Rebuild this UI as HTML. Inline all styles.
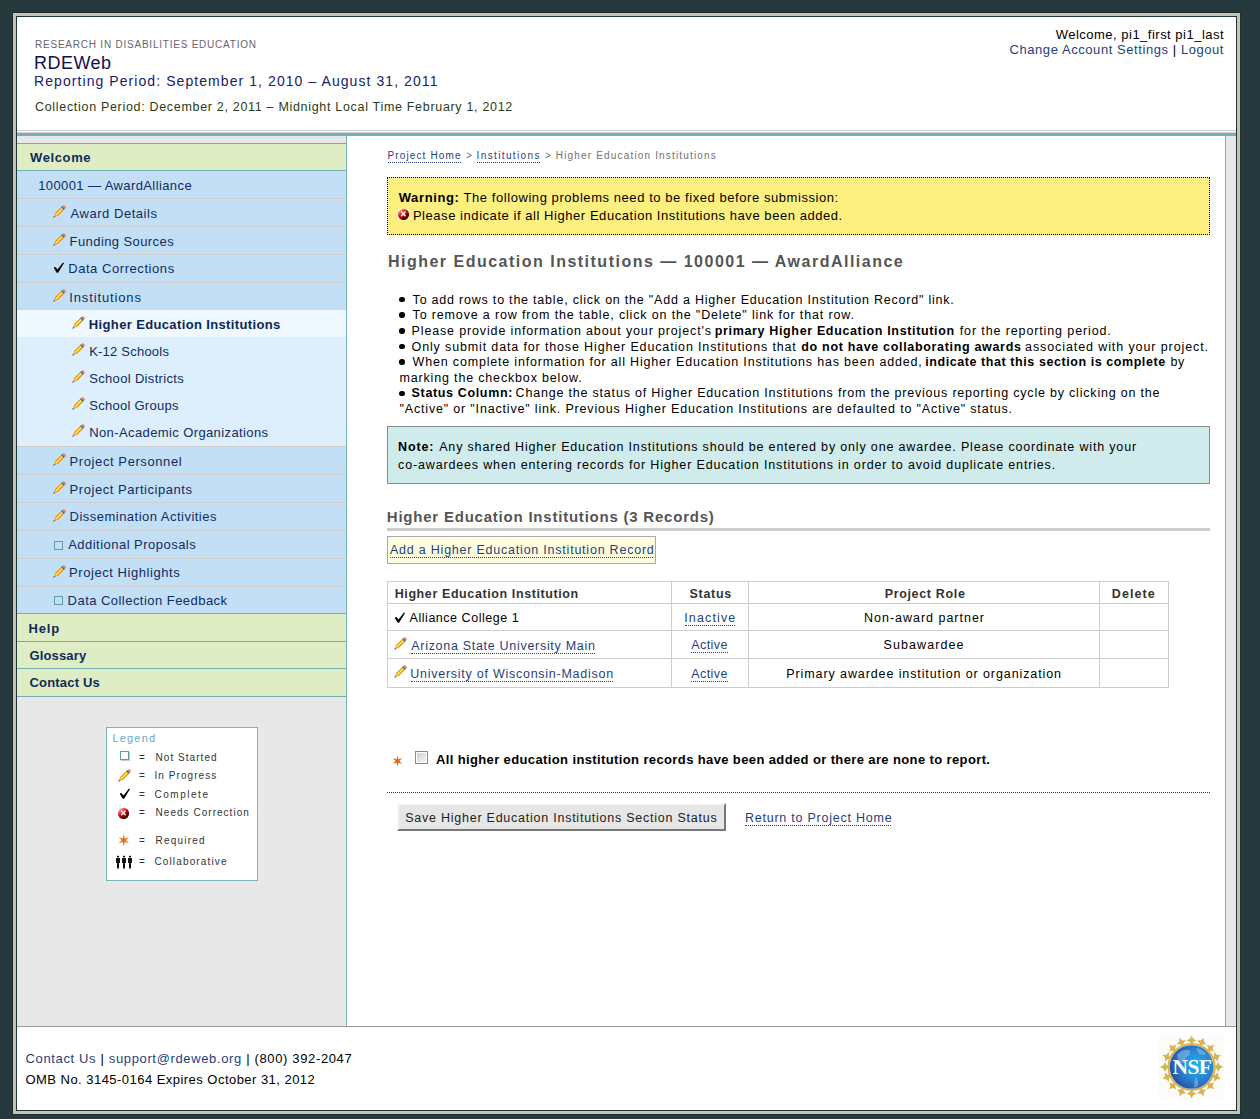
<!DOCTYPE html>
<html><head><meta charset="utf-8"><title>RDEWeb</title>
<style>
html,body{margin:0;padding:0;}
body{width:1260px;height:1119px;background:#263a3e;position:relative;overflow:hidden;font-family:"Liberation Sans", sans-serif;}
.r{position:absolute;box-sizing:content-box;}
.r svg{display:block;}
.t{position:absolute;white-space:nowrap;line-height:20px;font-family:"Liberation Sans", sans-serif;}
.du{text-decoration:underline dotted;text-decoration-thickness:1px;text-underline-offset:2px;}
</style></head><body>
<div class="r" style="left:12px;top:12px;width:1229px;height:1103px;background:#1d2f33;"></div>
<div class="r" style="left:13px;top:13px;width:1227px;height:1101px;background:#c6c4af;"></div>
<div class="r" style="left:16px;top:16px;width:1221px;height:1095px;background:#1f3236;"></div>
<div class="r" style="left:17px;top:17px;width:1219px;height:1093px;background:#ffffff;"></div>
<div class="r" style="left:17px;top:130px;width:1219px;height:1px;background:#c9c9c9;"></div>
<div class="r" style="left:17px;top:132px;width:1219px;height:1px;background:#d8d0d0;"></div>
<div class="r" style="left:17px;top:133px;width:1219px;height:3px;background:#72b0b2;"></div>
<div class="r" style="left:17px;top:136px;width:329px;height:890px;background:#e8e8e8;"></div>
<div class="r" style="left:346px;top:136px;width:1px;height:890px;background:#78b3b7;"></div>
<div class="r" style="left:1225px;top:136px;width:1px;height:890px;background:#76b2b6;"></div>
<div class="r" style="left:1226px;top:136px;width:10px;height:890px;background:#e8e8e8;"></div>
<div class="r" style="left:17px;top:1026px;width:1219px;height:1px;background:#9a9a9a;"></div>
<div class="r" style="left:17px;top:143px;width:329px;height:1px;background:#72aeb2;"></div>
<div class="r" style="left:17px;top:144px;width:329px;height:26px;background:#deedc3;"></div>
<div class="r" style="left:17px;top:170px;width:329px;height:1px;background:#72aeb2;"></div>
<div class="r" style="left:17px;top:171px;width:329px;height:27px;background:#c2dff6;"></div>
<div class="r" style="left:17px;top:198px;width:329px;height:1px;background:#cfcfcf;"></div>
<div class="r" style="left:17px;top:199px;width:329px;height:27px;background:#c2dff6;"></div>
<div class="r" style="left:17px;top:226px;width:329px;height:1px;background:#cfcfcf;"></div>
<div class="r" style="left:17px;top:227px;width:329px;height:27px;background:#c2dff6;"></div>
<div class="r" style="left:17px;top:254px;width:329px;height:1px;background:#cfcfcf;"></div>
<div class="r" style="left:17px;top:255px;width:329px;height:27px;background:#c2dff6;"></div>
<div class="r" style="left:17px;top:282px;width:329px;height:1px;background:#cfcfcf;"></div>
<div class="r" style="left:17px;top:283px;width:329px;height:27px;background:#c2dff6;"></div>
<div class="r" style="left:17px;top:310px;width:329px;height:27px;background:#eef8fe;"></div>
<div class="r" style="left:17px;top:337px;width:329px;height:109px;background:#ddeefc;"></div>
<div class="r" style="left:17px;top:446px;width:329px;height:1px;background:#cfcfcf;"></div>
<div class="r" style="left:17px;top:447px;width:329px;height:27px;background:#c2dff6;"></div>
<div class="r" style="left:17px;top:474px;width:329px;height:1px;background:#cfcfcf;"></div>
<div class="r" style="left:17px;top:475px;width:329px;height:27px;background:#c2dff6;"></div>
<div class="r" style="left:17px;top:502px;width:329px;height:1px;background:#cfcfcf;"></div>
<div class="r" style="left:17px;top:503px;width:329px;height:27px;background:#c2dff6;"></div>
<div class="r" style="left:17px;top:530px;width:329px;height:1px;background:#cfcfcf;"></div>
<div class="r" style="left:17px;top:531px;width:329px;height:27px;background:#c2dff6;"></div>
<div class="r" style="left:17px;top:558px;width:329px;height:1px;background:#cfcfcf;"></div>
<div class="r" style="left:17px;top:559px;width:329px;height:27px;background:#c2dff6;"></div>
<div class="r" style="left:17px;top:586px;width:329px;height:1px;background:#cfcfcf;"></div>
<div class="r" style="left:17px;top:587px;width:329px;height:26px;background:#c2dff6;"></div>
<div class="r" style="left:17px;top:613px;width:329px;height:1px;background:#72aeb2;"></div>
<div class="r" style="left:17px;top:614px;width:329px;height:27px;background:#deedc3;"></div>
<div class="r" style="left:17px;top:641px;width:329px;height:1px;background:#72aeb2;"></div>
<div class="r" style="left:17px;top:642px;width:329px;height:26px;background:#deedc3;"></div>
<div class="r" style="left:17px;top:668px;width:329px;height:1px;background:#72aeb2;"></div>
<div class="r" style="left:17px;top:669px;width:329px;height:27px;background:#deedc3;"></div>
<div class="r" style="left:17px;top:696px;width:329px;height:1px;background:#72aeb2;"></div>
<div class="r" style="left:53px;top:205px;width:13px;height:13px"><svg width="13" height="13" viewBox="0 0 13 13" style="overflow:visible"><g transform="translate(0.3,12.7) rotate(-45)">
<polygon points="0,0 4.4,-1.95 4.4,1.95" fill="#dcae94"/><polygon points="0,0 2.0,-0.9 2.0,0.9" fill="#6a625e"/>
<rect x="4.3" y="-1.95" width="8.6" height="3.9" fill="#e0800f"/><rect x="4.3" y="-1.1" width="8.6" height="2.2" fill="#ffcc10"/><rect x="4.3" y="-0.7" width="8.6" height="0.9" fill="#fff060"/>
<rect x="12.9" y="-1.95" width="1.6" height="3.9" fill="#2d6a86"/><rect x="12.9" y="-0.5" width="1.6" height="0.9" fill="#6aa8c8"/>
<path d="M14.5,-1.95 H15.1 A1.6,1.95 0 0 1 15.1,1.95 H14.5 Z" fill="#ee7d50"/></g></svg></div>
<div class="r" style="left:53px;top:233px;width:13px;height:13px"><svg width="13" height="13" viewBox="0 0 13 13" style="overflow:visible"><g transform="translate(0.3,12.7) rotate(-45)">
<polygon points="0,0 4.4,-1.95 4.4,1.95" fill="#dcae94"/><polygon points="0,0 2.0,-0.9 2.0,0.9" fill="#6a625e"/>
<rect x="4.3" y="-1.95" width="8.6" height="3.9" fill="#e0800f"/><rect x="4.3" y="-1.1" width="8.6" height="2.2" fill="#ffcc10"/><rect x="4.3" y="-0.7" width="8.6" height="0.9" fill="#fff060"/>
<rect x="12.9" y="-1.95" width="1.6" height="3.9" fill="#2d6a86"/><rect x="12.9" y="-0.5" width="1.6" height="0.9" fill="#6aa8c8"/>
<path d="M14.5,-1.95 H15.1 A1.6,1.95 0 0 1 15.1,1.95 H14.5 Z" fill="#ee7d50"/></g></svg></div>
<div class="r" style="left:53px;top:289px;width:13px;height:13px"><svg width="13" height="13" viewBox="0 0 13 13" style="overflow:visible"><g transform="translate(0.3,12.7) rotate(-45)">
<polygon points="0,0 4.4,-1.95 4.4,1.95" fill="#dcae94"/><polygon points="0,0 2.0,-0.9 2.0,0.9" fill="#6a625e"/>
<rect x="4.3" y="-1.95" width="8.6" height="3.9" fill="#e0800f"/><rect x="4.3" y="-1.1" width="8.6" height="2.2" fill="#ffcc10"/><rect x="4.3" y="-0.7" width="8.6" height="0.9" fill="#fff060"/>
<rect x="12.9" y="-1.95" width="1.6" height="3.9" fill="#2d6a86"/><rect x="12.9" y="-0.5" width="1.6" height="0.9" fill="#6aa8c8"/>
<path d="M14.5,-1.95 H15.1 A1.6,1.95 0 0 1 15.1,1.95 H14.5 Z" fill="#ee7d50"/></g></svg></div>
<div class="r" style="left:72px;top:316px;width:13px;height:13px"><svg width="13" height="13" viewBox="0 0 13 13" style="overflow:visible"><g transform="translate(0.3,12.7) rotate(-45)">
<polygon points="0,0 4.4,-1.95 4.4,1.95" fill="#dcae94"/><polygon points="0,0 2.0,-0.9 2.0,0.9" fill="#6a625e"/>
<rect x="4.3" y="-1.95" width="8.6" height="3.9" fill="#e0800f"/><rect x="4.3" y="-1.1" width="8.6" height="2.2" fill="#ffcc10"/><rect x="4.3" y="-0.7" width="8.6" height="0.9" fill="#fff060"/>
<rect x="12.9" y="-1.95" width="1.6" height="3.9" fill="#2d6a86"/><rect x="12.9" y="-0.5" width="1.6" height="0.9" fill="#6aa8c8"/>
<path d="M14.5,-1.95 H15.1 A1.6,1.95 0 0 1 15.1,1.95 H14.5 Z" fill="#ee7d50"/></g></svg></div>
<div class="r" style="left:72px;top:343px;width:13px;height:13px"><svg width="13" height="13" viewBox="0 0 13 13" style="overflow:visible"><g transform="translate(0.3,12.7) rotate(-45)">
<polygon points="0,0 4.4,-1.95 4.4,1.95" fill="#dcae94"/><polygon points="0,0 2.0,-0.9 2.0,0.9" fill="#6a625e"/>
<rect x="4.3" y="-1.95" width="8.6" height="3.9" fill="#e0800f"/><rect x="4.3" y="-1.1" width="8.6" height="2.2" fill="#ffcc10"/><rect x="4.3" y="-0.7" width="8.6" height="0.9" fill="#fff060"/>
<rect x="12.9" y="-1.95" width="1.6" height="3.9" fill="#2d6a86"/><rect x="12.9" y="-0.5" width="1.6" height="0.9" fill="#6aa8c8"/>
<path d="M14.5,-1.95 H15.1 A1.6,1.95 0 0 1 15.1,1.95 H14.5 Z" fill="#ee7d50"/></g></svg></div>
<div class="r" style="left:72px;top:370px;width:13px;height:13px"><svg width="13" height="13" viewBox="0 0 13 13" style="overflow:visible"><g transform="translate(0.3,12.7) rotate(-45)">
<polygon points="0,0 4.4,-1.95 4.4,1.95" fill="#dcae94"/><polygon points="0,0 2.0,-0.9 2.0,0.9" fill="#6a625e"/>
<rect x="4.3" y="-1.95" width="8.6" height="3.9" fill="#e0800f"/><rect x="4.3" y="-1.1" width="8.6" height="2.2" fill="#ffcc10"/><rect x="4.3" y="-0.7" width="8.6" height="0.9" fill="#fff060"/>
<rect x="12.9" y="-1.95" width="1.6" height="3.9" fill="#2d6a86"/><rect x="12.9" y="-0.5" width="1.6" height="0.9" fill="#6aa8c8"/>
<path d="M14.5,-1.95 H15.1 A1.6,1.95 0 0 1 15.1,1.95 H14.5 Z" fill="#ee7d50"/></g></svg></div>
<div class="r" style="left:72px;top:397px;width:13px;height:13px"><svg width="13" height="13" viewBox="0 0 13 13" style="overflow:visible"><g transform="translate(0.3,12.7) rotate(-45)">
<polygon points="0,0 4.4,-1.95 4.4,1.95" fill="#dcae94"/><polygon points="0,0 2.0,-0.9 2.0,0.9" fill="#6a625e"/>
<rect x="4.3" y="-1.95" width="8.6" height="3.9" fill="#e0800f"/><rect x="4.3" y="-1.1" width="8.6" height="2.2" fill="#ffcc10"/><rect x="4.3" y="-0.7" width="8.6" height="0.9" fill="#fff060"/>
<rect x="12.9" y="-1.95" width="1.6" height="3.9" fill="#2d6a86"/><rect x="12.9" y="-0.5" width="1.6" height="0.9" fill="#6aa8c8"/>
<path d="M14.5,-1.95 H15.1 A1.6,1.95 0 0 1 15.1,1.95 H14.5 Z" fill="#ee7d50"/></g></svg></div>
<div class="r" style="left:72px;top:424px;width:13px;height:13px"><svg width="13" height="13" viewBox="0 0 13 13" style="overflow:visible"><g transform="translate(0.3,12.7) rotate(-45)">
<polygon points="0,0 4.4,-1.95 4.4,1.95" fill="#dcae94"/><polygon points="0,0 2.0,-0.9 2.0,0.9" fill="#6a625e"/>
<rect x="4.3" y="-1.95" width="8.6" height="3.9" fill="#e0800f"/><rect x="4.3" y="-1.1" width="8.6" height="2.2" fill="#ffcc10"/><rect x="4.3" y="-0.7" width="8.6" height="0.9" fill="#fff060"/>
<rect x="12.9" y="-1.95" width="1.6" height="3.9" fill="#2d6a86"/><rect x="12.9" y="-0.5" width="1.6" height="0.9" fill="#6aa8c8"/>
<path d="M14.5,-1.95 H15.1 A1.6,1.95 0 0 1 15.1,1.95 H14.5 Z" fill="#ee7d50"/></g></svg></div>
<div class="r" style="left:53px;top:453px;width:13px;height:13px"><svg width="13" height="13" viewBox="0 0 13 13" style="overflow:visible"><g transform="translate(0.3,12.7) rotate(-45)">
<polygon points="0,0 4.4,-1.95 4.4,1.95" fill="#dcae94"/><polygon points="0,0 2.0,-0.9 2.0,0.9" fill="#6a625e"/>
<rect x="4.3" y="-1.95" width="8.6" height="3.9" fill="#e0800f"/><rect x="4.3" y="-1.1" width="8.6" height="2.2" fill="#ffcc10"/><rect x="4.3" y="-0.7" width="8.6" height="0.9" fill="#fff060"/>
<rect x="12.9" y="-1.95" width="1.6" height="3.9" fill="#2d6a86"/><rect x="12.9" y="-0.5" width="1.6" height="0.9" fill="#6aa8c8"/>
<path d="M14.5,-1.95 H15.1 A1.6,1.95 0 0 1 15.1,1.95 H14.5 Z" fill="#ee7d50"/></g></svg></div>
<div class="r" style="left:53px;top:481px;width:13px;height:13px"><svg width="13" height="13" viewBox="0 0 13 13" style="overflow:visible"><g transform="translate(0.3,12.7) rotate(-45)">
<polygon points="0,0 4.4,-1.95 4.4,1.95" fill="#dcae94"/><polygon points="0,0 2.0,-0.9 2.0,0.9" fill="#6a625e"/>
<rect x="4.3" y="-1.95" width="8.6" height="3.9" fill="#e0800f"/><rect x="4.3" y="-1.1" width="8.6" height="2.2" fill="#ffcc10"/><rect x="4.3" y="-0.7" width="8.6" height="0.9" fill="#fff060"/>
<rect x="12.9" y="-1.95" width="1.6" height="3.9" fill="#2d6a86"/><rect x="12.9" y="-0.5" width="1.6" height="0.9" fill="#6aa8c8"/>
<path d="M14.5,-1.95 H15.1 A1.6,1.95 0 0 1 15.1,1.95 H14.5 Z" fill="#ee7d50"/></g></svg></div>
<div class="r" style="left:53px;top:509px;width:13px;height:13px"><svg width="13" height="13" viewBox="0 0 13 13" style="overflow:visible"><g transform="translate(0.3,12.7) rotate(-45)">
<polygon points="0,0 4.4,-1.95 4.4,1.95" fill="#dcae94"/><polygon points="0,0 2.0,-0.9 2.0,0.9" fill="#6a625e"/>
<rect x="4.3" y="-1.95" width="8.6" height="3.9" fill="#e0800f"/><rect x="4.3" y="-1.1" width="8.6" height="2.2" fill="#ffcc10"/><rect x="4.3" y="-0.7" width="8.6" height="0.9" fill="#fff060"/>
<rect x="12.9" y="-1.95" width="1.6" height="3.9" fill="#2d6a86"/><rect x="12.9" y="-0.5" width="1.6" height="0.9" fill="#6aa8c8"/>
<path d="M14.5,-1.95 H15.1 A1.6,1.95 0 0 1 15.1,1.95 H14.5 Z" fill="#ee7d50"/></g></svg></div>
<div class="r" style="left:53px;top:565px;width:13px;height:13px"><svg width="13" height="13" viewBox="0 0 13 13" style="overflow:visible"><g transform="translate(0.3,12.7) rotate(-45)">
<polygon points="0,0 4.4,-1.95 4.4,1.95" fill="#dcae94"/><polygon points="0,0 2.0,-0.9 2.0,0.9" fill="#6a625e"/>
<rect x="4.3" y="-1.95" width="8.6" height="3.9" fill="#e0800f"/><rect x="4.3" y="-1.1" width="8.6" height="2.2" fill="#ffcc10"/><rect x="4.3" y="-0.7" width="8.6" height="0.9" fill="#fff060"/>
<rect x="12.9" y="-1.95" width="1.6" height="3.9" fill="#2d6a86"/><rect x="12.9" y="-0.5" width="1.6" height="0.9" fill="#6aa8c8"/>
<path d="M14.5,-1.95 H15.1 A1.6,1.95 0 0 1 15.1,1.95 H14.5 Z" fill="#ee7d50"/></g></svg></div>
<div class="r" style="left:53px;top:262px;width:11px;height:11px"><svg width="11" height="11" viewBox="0 0 11 11" style="overflow:visible"><path d="M1.0,6.3 C0.9,5.2 2.1,4.6 2.9,5.4 L4.5,7.5 L9.6,1.1 C10.2,0.6 11.0,0.9 11.2,1.3 L10.4,1.9 L5.1,10.8 L3.7,10.8 Z" fill="#000"/></svg></div>
<div class="r" style="left:54px;top:541px;width:9px;height:9px"><div style="position:absolute;width:7px;height:7px;border:1px solid #5b9fa5;"></div></div>
<div class="r" style="left:54px;top:596px;width:9px;height:9px"><div style="position:absolute;width:7px;height:7px;border:1px solid #5b9fa5;"></div></div>
<div class="r" style="left:106px;top:727px;width:150px;height:152px;background:#fff;border:1px solid #7ab6ba"></div>
<div class="r" style="left:120px;top:751px;width:9px;height:9px"><div style="position:absolute;left:1px;top:1px;width:9px;height:9px;background:#c8c8c8"></div><div style="position:absolute;width:7px;height:7px;border:1px solid #5b9fa5;background:#fff"></div></div>
<div class="r" style="left:118px;top:769px;width:13px;height:13px"><svg width="13" height="13" viewBox="0 0 13 13" style="overflow:visible"><g transform="translate(0.3,12.7) rotate(-45)">
<polygon points="0,0 4.4,-1.95 4.4,1.95" fill="#dcae94"/><polygon points="0,0 2.0,-0.9 2.0,0.9" fill="#6a625e"/>
<rect x="4.3" y="-1.95" width="8.6" height="3.9" fill="#e0800f"/><rect x="4.3" y="-1.1" width="8.6" height="2.2" fill="#ffcc10"/><rect x="4.3" y="-0.7" width="8.6" height="0.9" fill="#fff060"/>
<rect x="12.9" y="-1.95" width="1.6" height="3.9" fill="#2d6a86"/><rect x="12.9" y="-0.5" width="1.6" height="0.9" fill="#6aa8c8"/>
<path d="M14.5,-1.95 H15.1 A1.6,1.95 0 0 1 15.1,1.95 H14.5 Z" fill="#ee7d50"/></g></svg></div>
<div class="r" style="left:119px;top:788px;width:11px;height:11px"><svg width="11" height="11" viewBox="0 0 11 11" style="overflow:visible"><path d="M1.0,6.3 C0.9,5.2 2.1,4.6 2.9,5.4 L4.5,7.5 L9.6,1.1 C10.2,0.6 11.0,0.9 11.2,1.3 L10.4,1.9 L5.1,10.8 L3.7,10.8 Z" fill="#000"/></svg></div>
<div class="r" style="left:118px;top:808px;width:11px;height:11px"><svg width="11" height="11" viewBox="0 0 11 11"><defs><linearGradient id="rg" x1="0.15" y1="0.1" x2="0.85" y2="0.95"><stop offset="0" stop-color="#f2b0b8"/><stop offset="0.4" stop-color="#d40a10"/><stop offset="0.65" stop-color="#7a0000"/><stop offset="1" stop-color="#200000"/></linearGradient></defs><rect width="11" height="11" fill="#fff"/><circle cx="5.5" cy="5.5" r="5.6" fill="url(#rg)"/><path d="M3.6,3.1 L7.1,6.6 M7.1,3.1 L3.6,6.6" stroke="#f8e4e4" stroke-width="1.6" stroke-linecap="round"/></svg></div>
<div class="r" style="left:118px;top:834px;width:12px;height:12px"><svg width="12" height="12" viewBox="0 0 12 12"><polygon points="5.80,0.20 4.75,4.38 0.60,3.20 3.70,6.20 0.60,9.20 4.75,8.02 5.80,12.20 6.85,8.02 11.00,9.20 7.90,6.20 11.00,3.20 6.85,4.38" fill="#e07420"/></svg></div>
<div class="r" style="left:115px;top:855px;width:18px;height:14px"><svg width="18" height="14" viewBox="0 0 18 14"><rect x="1.9" y="0.8" width="2.2" height="1.6" rx="0.6" fill="#111"/><rect x="1" y="2.9" width="4" height="5.2" rx="0.5" fill="#111"/><rect x="2" y="7.9" width="2" height="5.7" rx="0.4" fill="#111"/><rect x="7.9" y="0.8" width="2.2" height="1.6" rx="0.6" fill="#111"/><rect x="7" y="2.9" width="4" height="5.2" rx="0.5" fill="#111"/><rect x="8" y="7.9" width="2" height="5.7" rx="0.4" fill="#111"/><rect x="13.9" y="0.8" width="2.2" height="1.6" rx="0.6" fill="#111"/><rect x="13" y="2.9" width="4" height="5.2" rx="0.5" fill="#111"/><rect x="14" y="7.9" width="2" height="5.7" rx="0.4" fill="#111"/></svg></div>
<div class="r" style="left:387px;top:177px;width:821px;height:56px;background:#fdf080;border:1px dotted #000"></div>
<div class="r" style="left:398px;top:209px;width:11px;height:11px"><svg width="11" height="11" viewBox="0 0 11 11"><defs><linearGradient id="rg" x1="0.15" y1="0.1" x2="0.85" y2="0.95"><stop offset="0" stop-color="#f2b0b8"/><stop offset="0.4" stop-color="#d40a10"/><stop offset="0.65" stop-color="#7a0000"/><stop offset="1" stop-color="#200000"/></linearGradient></defs><rect width="11" height="11" fill="#fff"/><circle cx="5.5" cy="5.5" r="5.6" fill="url(#rg)"/><path d="M3.6,3.1 L7.1,6.6 M7.1,3.1 L3.6,6.6" stroke="#f8e4e4" stroke-width="1.6" stroke-linecap="round"/></svg></div>
<div class="r" style="left:399.2px;top:296.9px;width:5.4px;height:5.4px;background:#000;border-radius:50%"></div>
<div class="r" style="left:399.2px;top:312.4px;width:5.4px;height:5.4px;background:#000;border-radius:50%"></div>
<div class="r" style="left:399.2px;top:328.2px;width:5.4px;height:5.4px;background:#000;border-radius:50%"></div>
<div class="r" style="left:399.2px;top:343.8px;width:5.4px;height:5.4px;background:#000;border-radius:50%"></div>
<div class="r" style="left:399.2px;top:359.3px;width:5.4px;height:5.4px;background:#000;border-radius:50%"></div>
<div class="r" style="left:399.2px;top:391.0px;width:5.4px;height:5.4px;background:#000;border-radius:50%"></div>
<div class="r" style="left:387px;top:426px;width:821px;height:56px;background:#d0ebeb;border:1px solid #8a8a8a"></div>
<div class="r" style="left:387px;top:528px;width:823px;height:3px;background:#cccccc;"></div>
<div class="r" style="left:387px;top:536px;width:267px;height:26px;background:#fefde0;border:1px solid #a8a8a8"></div>
<div class="r" style="left:387px;top:581px;width:780px;height:105px;background:transparent;border:1px solid #cdcdcd"></div>
<div class="r" style="left:387px;top:603px;width:781px;height:1px;background:#cdcdcd;"></div>
<div class="r" style="left:387px;top:630px;width:781px;height:1px;background:#cdcdcd;"></div>
<div class="r" style="left:387px;top:658px;width:781px;height:1px;background:#cdcdcd;"></div>
<div class="r" style="left:671px;top:581px;width:1px;height:106px;background:#cdcdcd;"></div>
<div class="r" style="left:748px;top:581px;width:1px;height:106px;background:#cdcdcd;"></div>
<div class="r" style="left:1099px;top:581px;width:1px;height:106px;background:#cdcdcd;"></div>
<div class="r" style="left:394px;top:612px;width:11px;height:11px"><svg width="11" height="11" viewBox="0 0 11 11" style="overflow:visible"><path d="M1.0,6.3 C0.9,5.2 2.1,4.6 2.9,5.4 L4.5,7.5 L9.6,1.1 C10.2,0.6 11.0,0.9 11.2,1.3 L10.4,1.9 L5.1,10.8 L3.7,10.8 Z" fill="#000"/></svg></div>
<div class="r" style="left:394px;top:637px;width:13px;height:13px"><svg width="13" height="13" viewBox="0 0 13 13" style="overflow:visible"><g transform="translate(0.3,12.7) rotate(-45)">
<polygon points="0,0 4.4,-1.95 4.4,1.95" fill="#dcae94"/><polygon points="0,0 2.0,-0.9 2.0,0.9" fill="#6a625e"/>
<rect x="4.3" y="-1.95" width="8.6" height="3.9" fill="#e0800f"/><rect x="4.3" y="-1.1" width="8.6" height="2.2" fill="#ffcc10"/><rect x="4.3" y="-0.7" width="8.6" height="0.9" fill="#fff060"/>
<rect x="12.9" y="-1.95" width="1.6" height="3.9" fill="#2d6a86"/><rect x="12.9" y="-0.5" width="1.6" height="0.9" fill="#6aa8c8"/>
<path d="M14.5,-1.95 H15.1 A1.6,1.95 0 0 1 15.1,1.95 H14.5 Z" fill="#ee7d50"/></g></svg></div>
<div class="r" style="left:394px;top:665px;width:13px;height:13px"><svg width="13" height="13" viewBox="0 0 13 13" style="overflow:visible"><g transform="translate(0.3,12.7) rotate(-45)">
<polygon points="0,0 4.4,-1.95 4.4,1.95" fill="#dcae94"/><polygon points="0,0 2.0,-0.9 2.0,0.9" fill="#6a625e"/>
<rect x="4.3" y="-1.95" width="8.6" height="3.9" fill="#e0800f"/><rect x="4.3" y="-1.1" width="8.6" height="2.2" fill="#ffcc10"/><rect x="4.3" y="-0.7" width="8.6" height="0.9" fill="#fff060"/>
<rect x="12.9" y="-1.95" width="1.6" height="3.9" fill="#2d6a86"/><rect x="12.9" y="-0.5" width="1.6" height="0.9" fill="#6aa8c8"/>
<path d="M14.5,-1.95 H15.1 A1.6,1.95 0 0 1 15.1,1.95 H14.5 Z" fill="#ee7d50"/></g></svg></div>
<div class="r" style="left:392px;top:755px;width:11px;height:12px"><svg width="11" height="12" viewBox="0 0 11 12"><polygon points="5.50,0.40 4.55,4.35 0.65,3.20 3.60,6.00 0.65,8.80 4.55,7.65 5.50,11.60 6.45,7.65 10.35,8.80 7.40,6.00 10.35,3.20 6.45,4.35" fill="#e06a10"/></svg></div>
<div class="r" style="left:415px;top:751px;width:13px;height:13px"><div style="position:absolute;left:0;top:0;width:11px;height:11px;border:1px solid #8a8a8a;background:#fff"></div><div style="position:absolute;left:2px;top:2px;width:9px;height:9px;background:linear-gradient(135deg,#c9ced8,#f6f6f6)"></div></div>
<div class="r" style="left:387px;top:792px;width:823px;height:0px;background:transparent;border-top:1px dotted #333"></div>
<div class="r" style="left:397px;top:803px;width:325px;height:24px;background:#e6e6e6;border:2px solid;border-color:#f8f8f8 #777 #777 #f8f8f8"></div>
<div class="r" style="left:1159px;top:1035px;width:65px;height:65px"><svg width="65" height="65" viewBox="0 0 65 65"><defs><radialGradient id="gl" cx="0.62" cy="0.45" r="0.7"><stop offset="0" stop-color="#1ab4ee"/><stop offset="0.45" stop-color="#2a8ad4"/><stop offset="0.8" stop-color="#2a5cb0"/><stop offset="1" stop-color="#0c3088"/></radialGradient></defs>
<rect width="65" height="65" fill="#fbfbf7"/>
<polygon points="32.60,0.40 34.23,3.77 37.60,5.40 34.23,7.03 32.60,10.40 30.97,7.03 27.60,5.40 30.97,3.77" fill="#d6b452"/><polygon points="44.69,2.81 44.90,6.54 47.40,9.34 43.66,9.55 40.87,12.04 40.65,8.30 38.16,5.51 41.90,5.30" fill="#d6b452"/><polygon points="54.94,9.66 53.71,13.19 54.94,16.73 51.41,15.49 47.87,16.73 49.11,13.19 47.87,9.66 51.41,10.89" fill="#d6b452"/><polygon points="61.79,19.91 59.30,22.70 59.09,26.44 56.30,23.95 52.56,23.73 55.05,20.94 55.26,17.20 58.06,19.70" fill="#d6b452"/><polygon points="64.20,32.00 60.83,33.63 59.20,37.00 57.57,33.63 54.20,32.00 57.57,30.37 59.20,27.00 60.83,30.37" fill="#d6b452"/><polygon points="61.79,44.09 58.06,44.30 55.26,46.80 55.05,43.06 52.56,40.27 56.30,40.05 59.09,37.56 59.30,41.30" fill="#d6b452"/><polygon points="54.94,54.34 51.41,53.11 47.87,54.34 49.11,50.81 47.87,47.27 51.41,48.51 54.94,47.27 53.71,50.81" fill="#d6b452"/><polygon points="44.69,61.19 41.90,58.70 38.16,58.49 40.65,55.70 40.87,51.96 43.66,54.45 47.40,54.66 44.90,57.46" fill="#d6b452"/><polygon points="32.60,63.60 30.97,60.23 27.60,58.60 30.97,56.97 32.60,53.60 34.23,56.97 37.60,58.60 34.23,60.23" fill="#d6b452"/><polygon points="20.51,61.19 20.30,57.46 17.80,54.66 21.54,54.45 24.33,51.96 24.55,55.70 27.04,58.49 23.30,58.70" fill="#d6b452"/><polygon points="10.26,54.34 11.49,50.81 10.26,47.27 13.79,48.51 17.33,47.27 16.09,50.81 17.33,54.34 13.79,53.11" fill="#d6b452"/><polygon points="3.41,44.09 5.90,41.30 6.11,37.56 8.90,40.05 12.64,40.27 10.15,43.06 9.94,46.80 7.14,44.30" fill="#d6b452"/><polygon points="1.00,32.00 4.37,30.37 6.00,27.00 7.63,30.37 11.00,32.00 7.63,33.63 6.00,37.00 4.37,33.63" fill="#d6b452"/><polygon points="3.41,19.91 7.14,19.70 9.94,17.20 10.15,20.94 12.64,23.73 8.90,23.95 6.11,26.44 5.90,22.70" fill="#d6b452"/><polygon points="10.26,9.66 13.79,10.89 17.33,9.66 16.09,13.19 17.33,16.73 13.79,15.49 10.26,16.73 11.49,13.19" fill="#d6b452"/><polygon points="20.51,2.81 23.30,5.30 27.04,5.51 24.55,8.30 24.33,12.04 21.54,9.55 17.80,9.34 20.30,6.54" fill="#d6b452"/>
<circle cx="32.6" cy="32.0" r="23.0" fill="none" stroke="#d6b452" stroke-width="2.2"/>
<circle cx="32.6" cy="32.0" r="21.8" fill="url(#gl)"/>
<path d="M18,20 q5,-6 12,-5 q3,3 -1,6 q-4,2 -3,6 q-3,2 -6,0 z M37,13 q7,1 10,6 q-3,2 -7,0 z M36,42 q4,2 3,8 q-2,4 -4,2 z" fill="#9cc4ea" opacity="0.5"/>
<text x="33.0" y="39.4" text-anchor="middle" font-family="Liberation Serif" font-size="21.5" font-weight="bold" fill="#fff" letter-spacing="-0.6">NSF</text></svg></div>
<div id="h1" class="t" style="left:35.00px;top:35px;font-size:10px;font-weight:normal;color:#676470;letter-spacing:0.776px;">RESEARCH IN DISABILITIES EDUCATION</div>
<div id="h2" class="t" style="left:34.00px;top:53px;font-size:18px;font-weight:normal;color:#10104e;letter-spacing:0.480px;">RDEWeb</div>
<div id="h3" class="t" style="left:34.00px;top:71px;font-size:14px;font-weight:normal;color:#20206a;letter-spacing:1.073px;">Reporting Period: September 1, 2010 &ndash; August 31, 2011</div>
<div id="h4" class="t" style="left:35.00px;top:97px;font-size:12.5px;font-weight:normal;color:#2a3a22;letter-spacing:0.688px;">Collection Period: December 2, 2011 &ndash; Midnight Local Time February 1, 2012</div>
<div id="h5" class="t" style="left:1055.70px;top:25px;font-size:13px;font-weight:normal;color:#000;letter-spacing:0.492px;">Welcome, pi1_first pi1_last</div>
<div id="h6" class="t" style="left:1009.50px;top:40px;font-size:13px;font-weight:normal;color:#000;letter-spacing:0.568px;"><span style="color:#1f3f7a">Change Account Settings</span> | <span style="color:#1f3f7a">Logout</span></div>
<div id="s1" class="t" style="left:30.10px;top:148px;font-size:13px;font-weight:bold;color:#0f2b5a;letter-spacing:0.600px;">Welcome</div>
<div id="s2" class="t" style="left:38.20px;top:176px;font-size:13px;font-weight:normal;color:#0f2c64;letter-spacing:0.400px;">100001 &mdash; AwardAlliance</div>
<div id="s3" class="t" style="left:70.60px;top:204px;font-size:13px;font-weight:normal;color:#0f2c64;letter-spacing:0.533px;">Award Details</div>
<div id="s4" class="t" style="left:69.60px;top:232px;font-size:13px;font-weight:normal;color:#0f2c64;letter-spacing:0.414px;">Funding Sources</div>
<div id="s5" class="t" style="left:68.20px;top:259px;font-size:13px;font-weight:normal;color:#0f2c64;letter-spacing:0.560px;">Data Corrections</div>
<div id="s6" class="t" style="left:69.20px;top:288px;font-size:13px;font-weight:normal;color:#0f2c64;letter-spacing:0.873px;">Institutions</div>
<div id="s7" class="t" style="left:88.80px;top:315px;font-size:13px;font-weight:bold;color:#0b2656;letter-spacing:0.364px;">Higher Education Institutions</div>
<div id="s8" class="t" style="left:89.20px;top:342px;font-size:13px;font-weight:normal;color:#0f2c64;letter-spacing:0.218px;">K-12 Schools</div>
<div id="s9" class="t" style="left:89.20px;top:369px;font-size:13px;font-weight:normal;color:#0f2c64;letter-spacing:0.333px;">School Districts</div>
<div id="s10" class="t" style="left:89.20px;top:396px;font-size:13px;font-weight:normal;color:#0f2c64;letter-spacing:0.267px;">School Groups</div>
<div id="s11" class="t" style="left:89.20px;top:423px;font-size:13px;font-weight:normal;color:#0f2c64;letter-spacing:0.392px;">Non-Academic Organizations</div>
<div id="s12" class="t" style="left:69.60px;top:452px;font-size:13px;font-weight:normal;color:#0f2c64;letter-spacing:0.588px;">Project Personnel</div>
<div id="s13" class="t" style="left:69.60px;top:480px;font-size:13px;font-weight:normal;color:#0f2c64;letter-spacing:0.547px;">Project Participants</div>
<div id="s14" class="t" style="left:69.60px;top:507px;font-size:13px;font-weight:normal;color:#0f2c64;letter-spacing:0.478px;">Dissemination Activities</div>
<div id="s15" class="t" style="left:68.20px;top:535px;font-size:13px;font-weight:normal;color:#0f2c64;letter-spacing:0.474px;">Additional Proposals</div>
<div id="s16" class="t" style="left:69.00px;top:563px;font-size:13px;font-weight:normal;color:#0f2c64;letter-spacing:0.565px;">Project Highlights</div>
<div id="s17" class="t" style="left:67.60px;top:591px;font-size:13px;font-weight:normal;color:#0f2c64;letter-spacing:0.461px;">Data Collection Feedback</div>
<div id="s18" class="t" style="left:28.50px;top:619px;font-size:13px;font-weight:bold;color:#0f2b5a;letter-spacing:0.800px;">Help</div>
<div id="s19" class="t" style="left:29.50px;top:646px;font-size:13px;font-weight:bold;color:#0f2b5a;letter-spacing:0.143px;">Glossary</div>
<div id="s20" class="t" style="left:29.50px;top:673px;font-size:13px;font-weight:bold;color:#0f2b5a;letter-spacing:0.178px;">Contact Us</div>
<div id="b1" class="t" style="left:387.40px;top:146px;font-size:10px;font-weight:normal;color:#1f3f7a;letter-spacing:1.145px;">Project Home</div>
<div id="b2" class="t" style="left:466.10px;top:146px;font-size:10px;font-weight:normal;color:#707070;letter-spacing:0.000px;">&gt;</div>
<div id="b3" class="t" style="left:476.60px;top:146px;font-size:10px;font-weight:normal;color:#1f3f7a;letter-spacing:1.364px;">Institutions</div>
<div id="b4" class="t" style="left:544.90px;top:146px;font-size:10px;font-weight:normal;color:#707070;letter-spacing:1.167px;">&gt; Higher Education Institutions</div>
<div id="w1" class="t" style="left:398.70px;top:188px;font-size:13px;font-weight:bold;color:#000;letter-spacing:0.629px;">Warning:</div>
<div id="w2" class="t" style="left:463.50px;top:188px;font-size:13px;font-weight:normal;color:#000;letter-spacing:0.565px;">The following problems need to be fixed before submission:</div>
<div id="w3" class="t" style="left:412.90px;top:206px;font-size:13px;font-weight:normal;color:#000;letter-spacing:0.553px;">Please indicate if all Higher Education Institutions have been added.</div>
<div id="hd" class="t" style="left:387.90px;top:252px;font-size:16px;font-weight:bold;color:#555;letter-spacing:1.494px;">Higher Education Institutions &mdash; 100001 &mdash; AwardAlliance</div>
<div id="l1" class="t" style="left:412.60px;top:290px;font-size:12.5px;font-weight:normal;color:#000;letter-spacing:0.784px;">To add rows to the table, click on the "Add a Higher Education Institution Record" link.</div>
<div id="l2" class="t" style="left:412.60px;top:305px;font-size:12.5px;font-weight:normal;color:#000;letter-spacing:0.845px;">To remove a row from the table, click on the "Delete" link for that row.</div>
<div id="l3a" class="t" style="left:411.60px;top:321px;font-size:12.5px;font-weight:normal;color:#000;letter-spacing:0.852px;">Please provide information about your project's</div>
<div id="l3b" class="t" style="left:714.80px;top:321px;font-size:12.5px;font-weight:bold;color:#000;letter-spacing:0.646px;">primary Higher Education Institution</div>
<div id="l3c" class="t" style="left:959.70px;top:321px;font-size:12.5px;font-weight:normal;color:#000;letter-spacing:0.883px;">for the reporting period.</div>
<div id="l4a" class="t" style="left:411.60px;top:337px;font-size:12.5px;font-weight:normal;color:#000;letter-spacing:0.857px;">Only submit data for those Higher Education Institutions that</div>
<div id="l4b" class="t" style="left:801.30px;top:337px;font-size:12.5px;font-weight:bold;color:#000;letter-spacing:0.677px;">do not have collaborating awards</div>
<div id="l4c" class="t" style="left:1025.10px;top:337px;font-size:12.5px;font-weight:normal;color:#000;letter-spacing:0.900px;">associated with your project.</div>
<div id="l5a" class="t" style="left:412.60px;top:352px;font-size:12.5px;font-weight:normal;color:#000;letter-spacing:0.818px;">When complete information for all Higher Education Institutions has been added,</div>
<div id="l5b" class="t" style="left:925.30px;top:352px;font-size:12.5px;font-weight:bold;color:#000;letter-spacing:0.568px;">indicate that this section is complete</div>
<div id="l5c" class="t" style="left:1170.40px;top:352px;font-size:12.5px;font-weight:normal;color:#000;letter-spacing:0.600px;">by</div>
<div id="l6" class="t" style="left:399.50px;top:368px;font-size:12.5px;font-weight:normal;color:#000;letter-spacing:0.831px;">marking the checkbox below.</div>
<div id="l7a" class="t" style="left:411.60px;top:383px;font-size:12.5px;font-weight:bold;color:#000;letter-spacing:0.646px;">Status Column:</div>
<div id="l7b" class="t" style="left:515.60px;top:383px;font-size:12.5px;font-weight:normal;color:#000;letter-spacing:0.802px;">Change the status of Higher Education Institutions from the previous reporting cycle by clicking on the</div>
<div id="l8" class="t" style="left:399.50px;top:399px;font-size:12.5px;font-weight:normal;color:#000;letter-spacing:0.822px;">"Active" or "Inactive" link. Previous Higher Education Institutions are defaulted to "Active" status.</div>
<div id="n1a" class="t" style="left:398.10px;top:437px;font-size:12.5px;font-weight:bold;color:#000;letter-spacing:0.850px;">Note:</div>
<div id="n1b" class="t" style="left:439.20px;top:437px;font-size:12.5px;font-weight:normal;color:#000;letter-spacing:0.832px;">Any shared Higher Education Institutions should be entered by only one awardee. Please coordinate with your</div>
<div id="n2" class="t" style="left:398.10px;top:455px;font-size:12.5px;font-weight:normal;color:#000;letter-spacing:0.841px;">co-awardees when entering records for Higher Education Institutions in order to avoid duplicate entries.</div>
<div id="sh" class="t" style="left:386.80px;top:507px;font-size:15px;font-weight:bold;color:#555;letter-spacing:0.780px;">Higher Education Institutions (3 Records)</div>
<div id="ad" class="t" style="left:390.00px;top:540px;font-size:12.5px;font-weight:normal;color:#1f3f7a;letter-spacing:0.775px;">Add a Higher Education Institution Record</div>
<div id="th1" class="t" style="left:394.70px;top:584px;font-size:12.5px;font-weight:bold;color:#333;letter-spacing:0.600px;">Higher Education Institution</div>
<div id="th2" class="t" style="left:689.50px;top:584px;font-size:12.5px;font-weight:bold;color:#333;letter-spacing:0.720px;">Status</div>
<div id="th3" class="t" style="left:884.70px;top:584px;font-size:12.5px;font-weight:bold;color:#333;letter-spacing:0.655px;">Project Role</div>
<div id="th4" class="t" style="left:1111.80px;top:584px;font-size:12.5px;font-weight:bold;color:#333;letter-spacing:1.080px;">Delete</div>
<div id="r1a" class="t" style="left:409.60px;top:608px;font-size:12.5px;font-weight:normal;color:#000;letter-spacing:0.529px;">Alliance College 1</div>
<div id="r1b" class="t" style="left:684.20px;top:608px;font-size:12.5px;font-weight:normal;color:#1f3f7a;letter-spacing:1.143px;">Inactive</div>
<div id="r1c" class="t" style="left:864.00px;top:608px;font-size:12.5px;font-weight:normal;color:#000;letter-spacing:0.987px;">Non-award partner</div>
<div id="r2a" class="t" style="left:411.30px;top:636px;font-size:12.5px;font-weight:normal;color:#1f3f7a;letter-spacing:0.700px;">Arizona State University Main</div>
<div id="r2b" class="t" style="left:691.30px;top:635px;font-size:12.5px;font-weight:normal;color:#1f3f7a;letter-spacing:0.400px;">Active</div>
<div id="r2c" class="t" style="left:883.60px;top:635px;font-size:12.5px;font-weight:normal;color:#000;letter-spacing:1.067px;">Subawardee</div>
<div id="r3a" class="t" style="left:410.30px;top:664px;font-size:12.5px;font-weight:normal;color:#1f3f7a;letter-spacing:0.740px;">University of Wisconsin-Madison</div>
<div id="r3b" class="t" style="left:691.30px;top:664px;font-size:12.5px;font-weight:normal;color:#1f3f7a;letter-spacing:0.400px;">Active</div>
<div id="r3c" class="t" style="left:786.30px;top:664px;font-size:12.5px;font-weight:normal;color:#000;letter-spacing:0.900px;">Primary awardee institution or organization</div>
<div id="cb" class="t" style="left:435.90px;top:750px;font-size:13px;font-weight:bold;color:#000;letter-spacing:0.379px;">All higher education institution records have been added or there are none to report.</div>
<div id="sv" class="t" style="left:405.20px;top:808px;font-size:12.5px;font-weight:normal;color:#222;letter-spacing:0.758px;">Save Higher Education Institutions Section Status</div>
<div id="rt" class="t" style="left:744.90px;top:808px;font-size:12.5px;font-weight:normal;color:#1f3f7a;letter-spacing:0.771px;">Return to Project Home</div>
<div id="f1" class="t" style="left:25.50px;top:1049px;font-size:13px;font-weight:normal;color:#000;letter-spacing:0.643px;"><span style="color:#1f3f7a">Contact Us</span> | <span style="color:#1f3f7a">support@rdeweb.org</span> | (800) 392-2047</div>
<div id="f2" class="t" style="left:25.50px;top:1070px;font-size:13px;font-weight:normal;color:#000;letter-spacing:0.463px;">OMB No. 3145-0164 Expires October 31, 2012</div>
<div id="lg" class="t" style="left:112.40px;top:728px;font-size:11px;font-weight:normal;color:#6aa6cc;letter-spacing:1.200px;">Legend</div>
<div id="lgt0" class="t" style="left:155.60px;top:748px;font-size:10px;font-weight:normal;color:#333;letter-spacing:1.040px;">Not Started</div>
<div id="lge0" class="t" style="left:139.00px;top:748px;font-size:10px;font-weight:normal;color:#333;letter-spacing:0.000px;">=</div>
<div id="lgt1" class="t" style="left:154.40px;top:766px;font-size:10px;font-weight:normal;color:#333;letter-spacing:1.080px;">In Progress</div>
<div id="lge1" class="t" style="left:139.00px;top:766px;font-size:10px;font-weight:normal;color:#333;letter-spacing:0.000px;">=</div>
<div id="lgt2" class="t" style="left:154.40px;top:785px;font-size:10px;font-weight:normal;color:#333;letter-spacing:1.543px;">Complete</div>
<div id="lge2" class="t" style="left:139.00px;top:785px;font-size:10px;font-weight:normal;color:#333;letter-spacing:0.000px;">=</div>
<div id="lgt3" class="t" style="left:155.60px;top:803px;font-size:10px;font-weight:normal;color:#333;letter-spacing:1.027px;">Needs Correction</div>
<div id="lge3" class="t" style="left:139.00px;top:803px;font-size:10px;font-weight:normal;color:#333;letter-spacing:0.000px;">=</div>
<div id="lgt4" class="t" style="left:155.60px;top:831px;font-size:10px;font-weight:normal;color:#333;letter-spacing:1.200px;">Required</div>
<div id="lge4" class="t" style="left:139.00px;top:831px;font-size:10px;font-weight:normal;color:#333;letter-spacing:0.000px;">=</div>
<div id="lgt5" class="t" style="left:154.40px;top:852px;font-size:10px;font-weight:normal;color:#333;letter-spacing:1.150px;">Collaborative</div>
<div id="lge5" class="t" style="left:139.00px;top:852px;font-size:10px;font-weight:normal;color:#333;letter-spacing:0.000px;">=</div>
<div class="r" style="left:388px;top:162px;width:73px;height:0;border-top:1px dotted #1f3f7a"></div>
<div class="r" style="left:477px;top:162px;width:63px;height:0;border-top:1px dotted #1f3f7a"></div>
<div class="r" style="left:390px;top:557px;width:263px;height:0;border-top:1px dotted #1f3f7a"></div>
<div class="r" style="left:685px;top:625px;width:50px;height:0;border-top:1px dotted #1f3f7a"></div>
<div class="r" style="left:411px;top:653px;width:184px;height:0;border-top:1px dotted #1f3f7a"></div>
<div class="r" style="left:691px;top:652px;width:37px;height:0;border-top:1px dotted #1f3f7a"></div>
<div class="r" style="left:411px;top:681px;width:202px;height:0;border-top:1px dotted #1f3f7a"></div>
<div class="r" style="left:691px;top:681px;width:37px;height:0;border-top:1px dotted #1f3f7a"></div>
<div class="r" style="left:745px;top:825px;width:146px;height:0;border-top:1px dotted #1f3f7a"></div>
</body></html>
